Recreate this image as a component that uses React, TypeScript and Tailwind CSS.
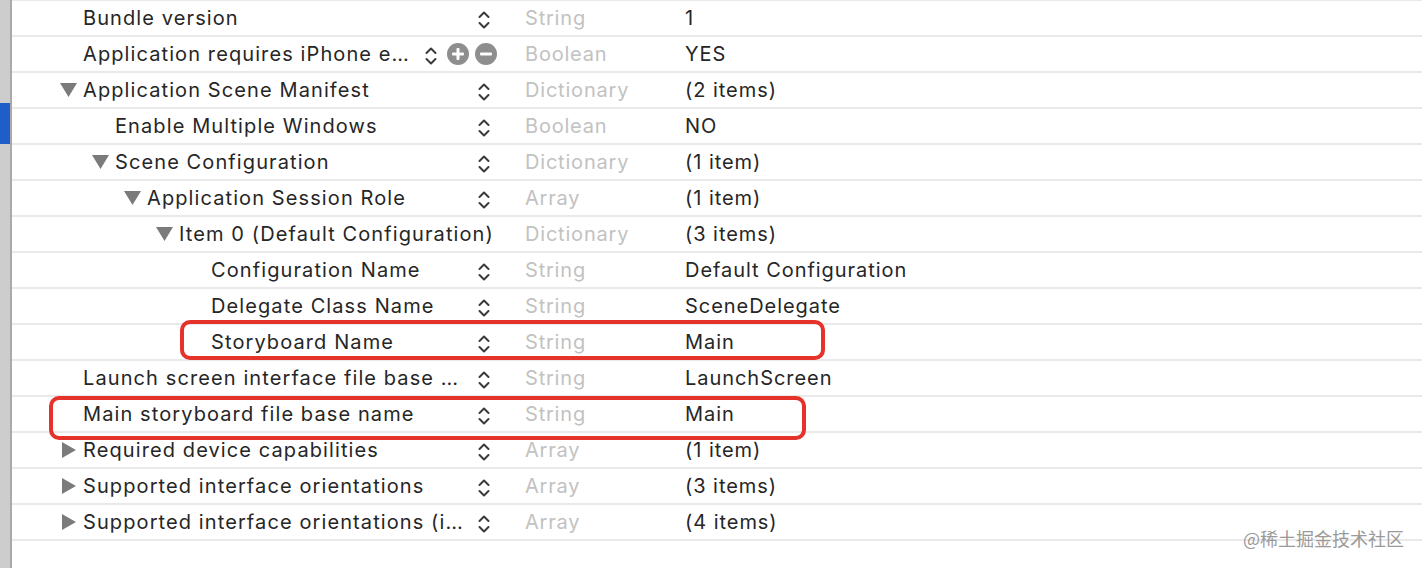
import React from 'react';

type Row = {
  name: string;
  level: number;
  toggle?: 'open' | 'closed';
  type: string;
  value: string;
  edit?: boolean;
  noStepper?: boolean;
};

const rows: Row[] = [
  { name: 'Bundle version', level: 0, type: 'String', value: '1' },
  { name: 'Application requires iPhone environment', level: 0, type: 'Boolean', value: 'YES', edit: true },
  { name: 'Application Scene Manifest', level: 0, toggle: 'open', type: 'Dictionary', value: '(2 items)' },
  { name: 'Enable Multiple Windows', level: 1, type: 'Boolean', value: 'NO' },
  { name: 'Scene Configuration', level: 1, toggle: 'open', type: 'Dictionary', value: '(1 item)' },
  { name: 'Application Session Role', level: 2, toggle: 'open', type: 'Array', value: '(1 item)' },
  { name: 'Item 0 (Default Configuration)', level: 3, toggle: 'open', type: 'Dictionary', value: '(3 items)', noStepper: true },
  { name: 'Configuration Name', level: 4, type: 'String', value: 'Default Configuration' },
  { name: 'Delegate Class Name', level: 4, type: 'String', value: 'SceneDelegate' },
  { name: 'Storyboard Name', level: 4, type: 'String', value: 'Main' },
  { name: 'Launch screen interface file base name', level: 0, type: 'String', value: 'LaunchScreen' },
  { name: 'Main storyboard file base name', level: 0, type: 'String', value: 'Main' },
  { name: 'Required device capabilities', level: 0, toggle: 'closed', type: 'Array', value: '(1 item)' },
  { name: 'Supported interface orientations', level: 0, toggle: 'closed', type: 'Array', value: '(3 items)' },
  { name: 'Supported interface orientations (iPad)', level: 0, toggle: 'closed', type: 'Array', value: '(4 items)' },
];

const indent = ['pl-[48px]', 'pl-[80px]', 'pl-[112px]', 'pl-[144px]', 'pl-[176px]'];

const Stepper = () => (
  <svg width="12" height="20" viewBox="0 0 12 20" className="shrink-0 mt-[4px]">
    <polyline points="1.5,7 6,2.5 10.5,7" fill="none" stroke="#3a3a3a" strokeWidth="2" strokeLinecap="round" strokeLinejoin="round" />
    <polyline points="1.5,13 6,17.5 10.5,13" fill="none" stroke="#3a3a3a" strokeWidth="2" strokeLinecap="round" strokeLinejoin="round" />
  </svg>
);

const RoundBtn = ({ plus }: { plus?: boolean }) => (
  <svg width="22" height="22" viewBox="0 0 22 22" className="shrink-0">
    <circle cx="11" cy="11" r="11" fill="#8e8e8e" />
    <rect x="5" y="9.5" width="12" height="3" rx="1" fill="#fff" />
    {plus && <rect x="9.5" y="5" width="3" height="12" rx="1" fill="#fff" />}
  </svg>
);

const Disclosure = ({ state }: { state?: 'open' | 'closed' }) => (
  <span className="w-[23px] shrink-0 flex items-center">
    {state === 'open' && (
      <svg width="17" height="14" viewBox="0 0 17 14">
        <polygon points="0,0 17,0 8.5,14" fill="#7b7b7b" />
      </svg>
    )}
    {state === 'closed' && (
      <svg width="14" height="16" viewBox="0 0 14 16" className="ml-[2px]">
        <polygon points="0,0 14,8 0,16" fill="#7b7b7b" />
      </svg>
    )}
  </span>
);

export default function App() {
  return (
    <div
      className="relative w-[1422px] h-[568px] overflow-hidden bg-white flex"
      style={{ fontFamily: 'Inter, "Noto Sans", sans-serif' }}
    >
      {/* gutter */}
      <div className="w-[12px] shrink-0 bg-[#cdcdcd] border-r-2 border-[#a9a9a9] flex flex-col">
        <div className="h-[103px]" />
        <div className="h-[41px] bg-[#1f5dc8]" />
      </div>

      {/* plist rows */}
      <div className="flex-1 flex flex-col border-t border-[#e9e9e9]">
        {rows.map((r) => (
          <div key={r.name} className="h-[36px] shrink-0 flex items-center border-b-2 border-[#e9e9e9] text-[20px] text-[#262626] tracking-[1.1px]">
            <div className={`w-[488px] shrink-0 flex items-center ${indent[r.level]}`}>
              <Disclosure state={r.toggle} />
              <span className="flex-1 min-w-0 truncate">{r.name}</span>
              {r.edit ? (
                <div className="flex items-center shrink-0 ml-[16px] pr-[3px]">
                  <Stepper />
                  <span className="ml-[10px]"><RoundBtn plus /></span>
                  <span className="ml-[6px]"><RoundBtn /></span>
                </div>
              ) : r.noStepper ? (
                <div className="w-[0px] shrink-0" />
              ) : (
                <div className="flex items-center shrink-0 ml-[10px] pr-[10px]">
                  <Stepper />
                </div>
              )}
            </div>
            <div className="w-[185px] shrink-0 pl-[25px] text-[#c2c2c2] tracking-[0.8px]">{r.type}</div>
            <div className="flex-1 tracking-[0.95px]">{r.value}</div>
          </div>
        ))}
      </div>

      {/* highlight boxes */}
      <div className="absolute left-[180px] top-[320px] w-[645px] h-[40px] border-[4px] border-[#e5322b] rounded-[10px]" />
      <div className="absolute left-[49px] top-[396px] w-[757px] h-[44px] border-[4px] border-[#e5322b] rounded-[10px]" />

      {/* watermark */}
      <div
        className="absolute left-[1243px] top-[529px] text-[18px] text-[#9a9a9a] leading-none"
        style={{ fontFamily: '"Noto Sans CJK SC", sans-serif' }}
      >
        @稀土掘金技术社区
      </div>
    </div>
  );
}
